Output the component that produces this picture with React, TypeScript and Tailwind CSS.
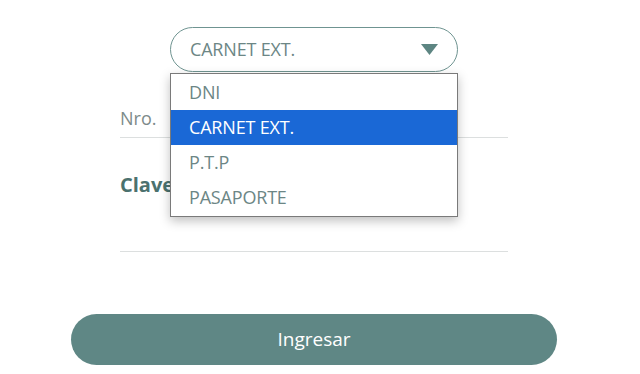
import React from 'react';

const options = ['DNI', 'CARNET EXT.', 'P.T.P', 'PASAPORTE'];

export default function App() {
  const selected = 'CARNET EXT.';

  return (
    <div
      className="w-[640px] h-[374px] bg-white overflow-hidden"
      style={{ fontFamily: '"Open Sans", "Noto Sans", sans-serif' }}
    >
      <div className="ml-[71px] w-[486px] pt-[27px] flex flex-col items-center">
        {/* Document type select */}
        <div className="relative w-[288px]">
          <div className="h-[45px] rounded-full border border-[#6f9491] flex items-center justify-between pl-[19px] pr-[19px]">
            <span className="text-[18px] text-[#6c8685] tracking-[-0.01em]">{selected}</span>
            <svg width="17" height="11" viewBox="0 0 17 11">
              <path d="M0 0 L17 0 L8.5 11 Z" fill="#5d8582" />
            </svg>
          </div>

          <ul className="absolute left-0 top-[46px] w-[288px] bg-white border border-[#7a7a7a] shadow-[0_4px_10px_rgba(0,0,0,0.25)] py-[1px] z-10">
            {options.map((opt) => (
              <li
                key={opt}
                className={`h-[35px] flex items-center pl-[18px] text-[18px] tracking-[-0.01em] ${
                  opt === selected ? 'bg-[#1a68d6] text-white' : 'text-[#6c8685]'
                }`}
              >
                {opt}
              </li>
            ))}
          </ul>
        </div>

        {/* Number field */}
        <div className="w-[388px] mt-[27px] h-[39px] border-b border-[#dcdfdf] flex items-center">
          <span className="text-[18px] text-[#7d8b8a]">Nro.</span>
        </div>

        {/* Password field */}
        <div className="w-[388px] h-[114px] border-b border-[#dcdfdf] pt-[33px]">
          <span className="text-[20px] font-bold text-[#4b716e] leading-[28px]">Clave</span>
        </div>

        <button className="mt-[62px] w-[486px] h-[51px] rounded-full bg-[#5f8785] text-white text-[19px]">
          Ingresar
        </button>
      </div>
    </div>
  );
}
